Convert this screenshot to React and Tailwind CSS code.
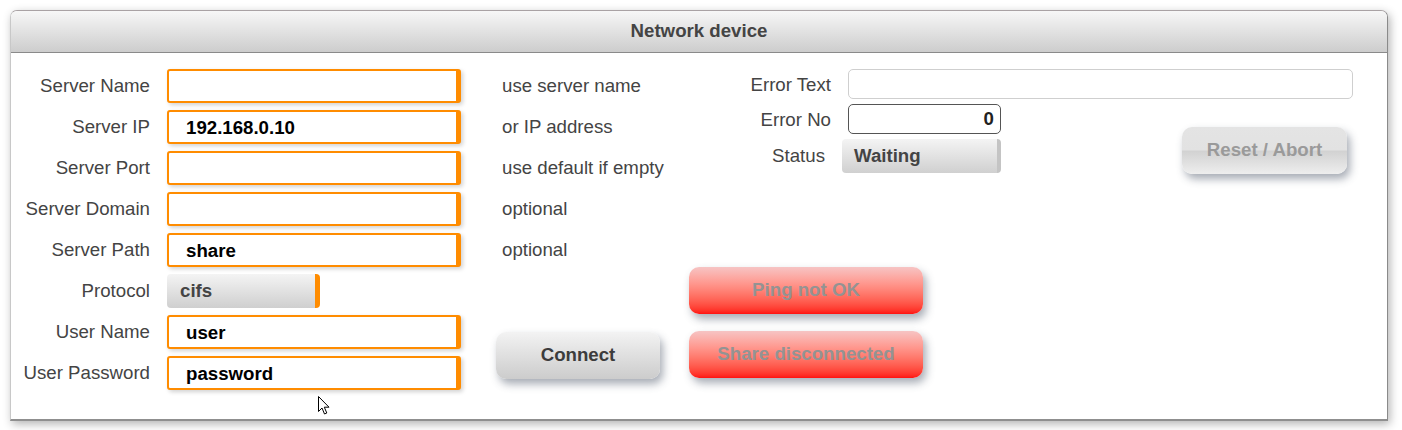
import React from "react";

const FONT = { fontFamily: '"Liberation Sans", Arial, sans-serif' };

function OrangeInput({ value }) {
  return (
    <div className="h-[34px] w-[294px] rounded-[3px] border-2 border-r-[5px] border-[#ff8c00] bg-white pl-[17px] pt-[2px] flex items-center font-bold text-black shadow-[2px_2px_4px_rgba(0,0,0,0.18)]">
      {value}
    </div>
  );
}

function Label({ children, w = "w-[139px]", className = "" }) {
  return (
    <div className={`${w} shrink-0 text-right text-[#444] whitespace-nowrap ${className}`}>{children}</div>
  );
}

function Row({ label, children }) {
  return (
    <div className="flex h-[34px] items-center gap-[17px]">
      <Label>{label}</Label>
      {children}
    </div>
  );
}

function Btn({ children, className }) {
  return (
    <div
      className={`flex h-[47px] items-center justify-center rounded-[10px] font-bold shadow-[3px_5px_8px_rgba(60,72,90,0.45)] ${className}`}
    >
      {children}
    </div>
  );
}

export default function App() {
  return (
    <div className="relative h-[430px] w-[1402px] bg-white pl-[10px] pt-[10px] text-[18.67px] leading-none" style={FONT}>
      <div className="flex h-[411px] w-[1378px] flex-col rounded-t-[7px] border border-b-2 border-[#a9a2a4] border-l-[#c8c8c8] border-r-[#8a8a8a] border-b-[#8f8f8f] bg-white shadow-[2px_3px_10px_rgba(0,0,0,0.3)]">
        <div className="flex h-[42px] shrink-0 items-center justify-center rounded-t-[6px] border-b border-[#8a8a8a] bg-gradient-to-b from-[#f7f7f7] to-[#cdcdcd] font-bold text-[#444]">
          Network device
        </div>
        <div className="flex pt-[16px]">
          {/* Column A */}
          <div className="flex flex-col gap-[7px]">
            <Row label="Server Name"><OrangeInput value="" /></Row>
            <Row label="Server IP"><OrangeInput value="192.168.0.10" /></Row>
            <Row label="Server Port"><OrangeInput value="" /></Row>
            <Row label="Server Domain"><OrangeInput value="" /></Row>
            <Row label="Server Path"><OrangeInput value="share" /></Row>
            <Row label="Protocol">
              <div className="flex h-[34px] w-[153px] items-center rounded-[4px] border-r-[5px] border-[#ff8c00] bg-gradient-to-b from-[#f4f4f4] to-[#cfcfcf] pl-[13px] font-bold text-[#444]">
                cifs
              </div>
            </Row>
            <Row label="User Name"><OrangeInput value="user" /></Row>
            <Row label="User Password"><OrangeInput value="password" /></Row>
          </div>

          {/* Column B */}
          <div className="ml-[35px] flex w-[164px] flex-col">
            <div className="flex flex-col gap-[7px] pl-[6px] text-[#444]">
              {["use server name", "or IP address", "use default if empty", "optional", "optional"].map((t, i) => (
                <div key={i} className="flex h-[34px] items-center whitespace-nowrap">{t}</div>
              ))}
            </div>
            <Btn className="mt-[65px] w-[164px] bg-gradient-to-b from-[#f3f3f3] to-[#cccccc] text-[#3c3c3c]">
              Connect
            </Btn>
          </div>

          {/* Column C */}
          <div className="ml-[29px] flex flex-col">
            <div className="flex h-[30px] items-center gap-[17px]">
              <Label w="w-[142px]" className="pt-[3px]">Error Text</Label>
              <div className="h-[30px] w-[505px] rounded-[5px] border border-[#cfcfcf] bg-white" />
            </div>
            <div className="mt-[5px] flex items-end">
              <div className="flex flex-col gap-[5px]">
                <div className="flex h-[30px] items-center gap-[17px]">
                  <Label w="w-[142px]" className="pt-[3px]">Error No</Label>
                  <div className="flex h-[30px] w-[153px] items-center justify-end rounded-[5px] border border-[#555] bg-white pr-[6px] pt-[1px] font-bold text-[#222]">
                    0
                  </div>
                </div>
                <div className="flex h-[34px] items-center gap-[17px]">
                  <Label w="w-[136px]">Status</Label>
                  <div className="flex h-[34px] w-[159px] items-center rounded-[4px] border-r-[4px] border-[#c4c4c4] bg-gradient-to-b from-[#f4f4f4] to-[#d0d0d0] pl-[12px] font-bold text-[#444]">
                    Waiting
                  </div>
                </div>
              </div>
              <Btn className="ml-[181px] mb-[-1px] w-[165px] bg-[linear-gradient(to_bottom,#e4e4e4_0%,#e2e2e2_48%,#d2d2d2_52%,#eeeeee_100%)] text-[#9a9a9a]">
                Reset / Abort
              </Btn>
            </div>
            <Btn className="mt-[94px] w-[234px] bg-gradient-to-b from-[#f6c4c4] to-[#ff0f0f] text-[#939393]">
              Ping not OK
            </Btn>
            <Btn className="mt-[17px] w-[234px] bg-gradient-to-b from-[#f6c4c4] to-[#ff0f0f] text-[#939393]">
              Share disconnected
            </Btn>
          </div>
        </div>
      </div>

      {/* mouse cursor */}
      <svg className="absolute left-[318px] top-[396px]" width="14" height="20" viewBox="0 0 14 20">
        <path d="M0.5 0.5 L0.5 15.5 L4 12 L6.5 18 L8.8 17 L6.3 11.2 L11 11.2 Z" fill="#fff" stroke="#000" strokeWidth="1" strokeLinejoin="miter" />
      </svg>
    </div>
  );
}
